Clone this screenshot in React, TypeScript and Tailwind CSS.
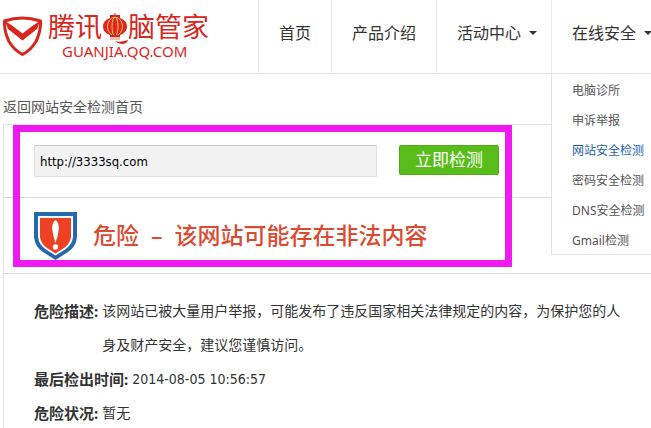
import clsx from "clsx";

const navItems = [
    { label: "首页", hasMenu: false },
    { label: "产品介绍", hasMenu: false },
    { label: "活动中心", hasMenu: true },
];

const safetyLinks = [
    { label: "电脑诊所", active: false },
    { label: "申诉举报", active: false },
    { label: "网站安全检测", active: true },
    { label: "密码安全检测", active: false },
    { label: "DNS安全检测", active: false },
    { label: "Gmail检测", active: false },
];

function Caret() {
    return <span className="ml-2 h-0 w-0 border-x-4 border-t-4 border-x-transparent border-t-[#333]" />;
}

function Lantern() {
    return (
        <svg viewBox="0 0 26 34" className="h-[34px] w-[26px]" aria-hidden="true">
            <path d="M13 1v5" stroke="#d9241c" strokeWidth="1" />
            <rect x="8" y="3" width="10" height="3" fill="#d9241c" />
            <ellipse cx="13" cy="14.5" rx="12" ry="9.5" fill="#e0281c" />
            <g fill="none" stroke="#f6c06c" strokeWidth="1">
                <ellipse cx="13" cy="14.5" rx="3" ry="9.3" />
                <ellipse cx="13" cy="14.5" rx="7.5" ry="9.3" />
            </g>
            <rect x="8" y="23" width="10" height="2" fill="#d9241c" />
            <path d="M9 25v3M11 25v3M13 25v3M15 25v3M17 25v3" stroke="#e8786e" strokeWidth="1" />
            <path d="M13 29q5 2 13 -1q-1 4 -6 4q-4 0 -7 -3z" fill="#d9241c" />
        </svg>
    );
}

function Logo() {
    return (
        <a href="#" className="flex w-[258px] shrink-0 items-start pl-[3px] pt-3 text-[#d9261c]">
            <svg viewBox="0 0 39 40" className="mt-1 h-10 w-[39px]" aria-hidden="true">
                <path
                    d="M1.500 5Q19 -1 37.500 5Q38 15 33 25.500Q28 34 19.500 38.500Q11 34 6 25.500Q1 15 1.500 5z"
                    fill="none"
                    stroke="#d9261c"
                    strokeWidth="3"
                    strokeLinejoin="round"
                />
                <path d="M2 5L9 9.500L19.500 17.500L30 9.500L37 5L34 13L19.500 24.500L5 13z" fill="#d9261c" />
            </svg>
            <span className="ml-1.5 flex flex-col">
                <span className="flex items-start text-[27px] leading-[30px]">
                    腾讯
                    <Lantern />
                    脑管家
                </span>
                <span className="-mt-1 pl-3.5 text-[15px] leading-[18px]">GUANJIA.QQ.COM</span>
            </span>
        </a>
    );
}

function Header() {
    return (
        <header className="flex h-[74px] border-b border-[#e3e3e3]">
            <Logo />
            <nav className="flex shrink-0 text-base text-[#333]">
                {navItems.map((item) => (
                    <a
                        key={item.label}
                        href="#"
                        className={clsx(
                            "flex items-center border-l border-[#e8e8e8] pb-[7px] pl-5",
                            item.hasMenu ? "pr-3.5" : "pr-5"
                        )}
                    >
                        {item.label}
                        {item.hasMenu && <Caret />}
                    </a>
                ))}
                <div className="relative border-l border-[#e8e8e8]">
                    <a href="#" className="flex h-full items-center pb-[7px] pl-5 pr-3.5">
                        在线安全
                        <Caret />
                    </a>
                    <ul className="absolute -left-px top-full z-10 mt-px h-[181px] w-[120px] border border-t-0 border-[#e3e3e3] bg-white pt-0.5 text-xs leading-[30px] text-[#555]">
                        {safetyLinks.map((link) => (
                            <li key={link.label}>
                                <a href="#" className={clsx("block pl-5", link.active && "text-[#1e5fb4]")}>
                                    {link.label}
                                </a>
                            </li>
                        ))}
                    </ul>
                </div>
            </nav>
        </header>
    );
}

function DangerShield() {
    return (
        <svg viewBox="0 0 43 48" className="h-12 w-[43px] shrink-0" aria-hidden="true">
            <path d="M0 0H43V25Q42 35 34 40L21.500 48L9 40Q1 35 0 25z" fill="#2468b0" />
            <path d="M4 4H39V25Q38 33 31 37.500L21.500 43.500L12 37.500Q5 33 4 25z" fill="#fff" />
            <path d="M6 6H37V25Q36 32 30 36L21.500 41.500L13 36Q7 32 6 25z" fill="#ee4123" />
            <path d="M21.500 8Q24 9 25 16Q24 24 21.500 31Q19 24 18 16Q19 9 21.500 8z" fill="#fff" />
            <circle cx="21.500" cy="35" r="2.700" fill="#fff" />
        </svg>
    );
}

export default function App() {
    return (
        <div className="overflow-x-clip bg-white font-['Noto_Sans','Noto_Sans_CJK_SC',sans-serif] text-[#333]">
            <Header />
            <main className="pl-[3px] pt-5">
                <a href="#" className="block text-sm leading-[26px] text-[#555]">
                    返回网站安全检测首页
                </a>
                <section className="relative mt-1 border-l border-t border-[#e3e3e3]">
                    <form
                        className="flex h-[73px] items-start gap-[22px] border-b border-[#d9d9d9] pl-[30px] pt-5"
                        onSubmit={(e) => e.preventDefault()}
                    >
                        <input
                            type="text"
                            aria-label="网址"
                            defaultValue="http://3333sq.com"
                            className="h-8 w-[343px] border border-[#e0e0e0] border-t-[#c8c8c8] bg-[#f2f2f2] px-[5px] font-['DejaVu_Sans_Condensed','Noto_Sans',sans-serif] text-[13px] text-black"
                        />
                        <button
                            type="submit"
                            className="h-[30px] w-[100px] rounded-xs border border-[#4fae18] bg-[#58bd18] text-[17px] leading-7 text-white"
                        >
                            立即检测
                        </button>
                    </form>
                    <div className="flex h-[76px] items-center border-b border-[#d9d9d9] pl-[30px]">
                        <DangerShield />
                        <h1 className="ml-4 flex gap-3 text-[23px] font-medium text-[#dc4a30]">
                            <span>危险</span>
                            <span>–</span>
                            <span>该网站可能存在非法内容</span>
                        </h1>
                    </div>
                    <dl className="pl-[30px] pr-7 pt-5 text-sm leading-[34px]">
                        <div className="flex gap-1">
                            <dt className="shrink-0 text-[15px] font-bold">危险描述:</dt>
                            <dd className="max-w-[525px]">
                                该网站已被大量用户举报，可能发布了违反国家相关法律规定的内容，为保护您的人身及财产安全，建议您谨慎访问。
                            </dd>
                        </div>
                        <div className="flex gap-1">
                            <dt className="text-[15px] font-bold">最后检出时间:</dt>
                            <dd className="font-['DejaVu_Sans_Condensed','Noto_Sans',sans-serif]">2014-08-05 10:56:57</dd>
                        </div>
                        <div className="flex gap-1">
                            <dt className="text-[15px] font-bold">危险状况:</dt>
                            <dd>暂无</dd>
                        </div>
                    </dl>
                    <div className="pointer-events-none absolute left-[9px] top-0 h-[142px] w-[499px] border-[7px] border-[#f01af0]" />
                </section>
            </main>
        </div>
    );
}
